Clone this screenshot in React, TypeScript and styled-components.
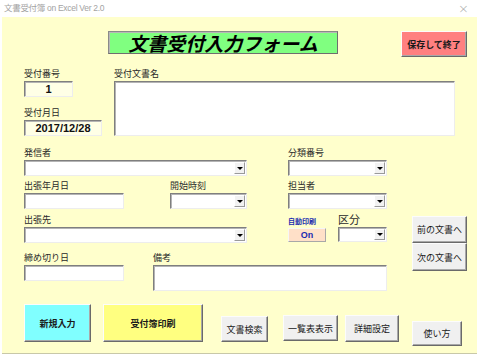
import styled, { createGlobalStyle } from 'styled-components'

const jp = `'Noto Sans CJK JP', 'Noto Sans', sans-serif`

const GlobalStyle = createGlobalStyle`
  html, body {
    margin: 0;
    padding: 0;
    background: #ffffff;
  }
  body {
    font-family: ${jp};
  }
  * {
    box-sizing: border-box;
  }
`

export default function App() {
  return (
    <>
      <GlobalStyle />
      <Window>
        <TitleBar>
          <WindowTitle>文書受付簿 on Excel Ver 2.0</WindowTitle>
          <CloseMark>×</CloseMark>
        </TitleBar>

        <Body>
          <HeaderRow>
            <FormTitle>文書受付入力フォーム</FormTitle>
            <Btn $bg="#ff8080" $w={66} $h={26} $ml={63} $bold>
              保存して終了
            </Btn>
          </HeaderRow>

          <TopBlock>
            <Column>
              <Field $w={49}>
                <Label>受付番号</Label>
                <DisplayBox $h={16}>1</DisplayBox>
              </Field>
              <Field $w={78} $mt={15}>
                <Label>受付月日</Label>
                <DisplayBox $h={16}>2017/12/28</DisplayBox>
              </Field>
            </Column>
            <Field $w={341} $ml={12}>
              <Label>受付文書名</Label>
              <TextBox $h={55} />
            </Field>
          </TopBlock>

          <RowsArea>
            <Column>
              <Row>
                <Field $w={223}>
                  <Label>発信者</Label>
                  <Combo h={16} />
                </Field>
                <Field $w={99} $ml={41}>
                  <Label>分類番号</Label>
                  <Combo h={16} />
                </Field>
              </Row>

              <Row $mt={9}>
                <Field $w={100}>
                  <Label>出張年月日</Label>
                  <TextBox $h={16} />
                </Field>
                <Field $w={77} $ml={46}>
                  <Label>開始時刻</Label>
                  <Combo h={16} />
                </Field>
                <Field $w={99} $ml={41}>
                  <Label>担当者</Label>
                  <Combo h={16} />
                </Field>
              </Row>

              <Row $mt={10}>
                <Field $w={223}>
                  <Label>出張先</Label>
                  <Combo h={16} />
                </Field>
                <Field $w={38} $ml={41}>
                  <SmallLabel>自動印刷</SmallLabel>
                  <Toggle>On</Toggle>
                </Field>
                <Field $w={49} $ml={12}>
                  <BigLabel>区分</BigLabel>
                  <Combo h={15} />
                </Field>
              </Row>

              <Row $mt={14}>
                <Field $w={100}>
                  <Label>締め切り日</Label>
                  <TextBox $h={16} />
                </Field>
                <Field $w={234} $ml={29}>
                  <Label>備考</Label>
                  <TextBox $h={26} />
                </Field>
              </Row>
            </Column>

            <NavColumn>
              <Btn $w={55} $h={27}>前の文書へ</Btn>
              <Btn $w={55} $h={28}>次の文書へ</Btn>
            </NavColumn>
          </RowsArea>

          <ButtonRow>
            <Btn $bg="#80ffff" $w={67} $h={38} $bold>
              新規入力
            </Btn>
            <Btn $bg="#ffff80" $w={100} $h={38} $ml={12} $bold>
              受付簿印刷
            </Btn>
            <Btn $w={47} $h={26} $ml={18} $mt={12}>
              文書検索
            </Btn>
            <Btn $w={55} $h={26} $ml={15} $mt={11}>
              一覧表表示
            </Btn>
            <Btn $w={54} $h={27} $ml={7} $mt={11}>
              詳細設定
            </Btn>
            <Btn $w={50} $h={25} $ml={13} $mt={17}>
              使い方
            </Btn>
          </ButtonRow>
        </Body>
      </Window>
    </>
  )
}

function Combo({ h }: { h: number }) {
  return (
    <ComboBox $h={h}>
      <DropButton>
        <Arrow />
      </DropButton>
    </ComboBox>
  )
}

const Window = styled.div`
  width: 480px;
  height: 356px;
  display: flex;
  flex-direction: column;
  background: #ffffff;
  overflow: hidden;
`

const TitleBar = styled.div`
  height: 17px;
  display: flex;
  align-items: center;
  justify-content: space-between;
  padding: 0 11px 0 4px;
  color: #a3a3a3;
`

const WindowTitle = styled.span`
  font-family: 'Liberation Sans', 'Noto Sans CJK JP', sans-serif;
  font-size: 8.5px;
  letter-spacing: -0.3px;
  line-height: 17px;
`

const CloseMark = styled.span`
  font-family: 'DejaVu Sans', sans-serif;
  font-size: 13px;
  font-weight: 300;
  line-height: 17px;
  color: #a8a8a8;
`

const Body = styled.div`
  flex: 1;
  margin: 0 3px 2px 2px;
  padding: 14px 0 0 22px;
  background: #ffffcc;
  border-bottom: 1px solid #c8c8a8;
  display: flex;
  flex-direction: column;
`

const HeaderRow = styled.div`
  display: flex;
  align-items: flex-start;
  padding-left: 84px;
`

const FormTitle = styled.div`
  width: 230px;
  height: 23px;
  background: #80ff80;
  border: 1px solid #8a8a8a;
  border-right-color: #6e6e6e;
  border-bottom-color: #6e6e6e;
  box-shadow: inset 1px 1px 0 #b8b8b8;
  font-family: ${jp};
  font-size: 19px;
  font-weight: 700;
  font-style: italic;
  line-height: 21px;
  text-align: center;
  color: #000;
`

const TopBlock = styled.div`
  display: flex;
  margin-top: 16px;
`

const Column = styled.div`
  display: flex;
  flex-direction: column;
`

const Row = styled.div<{ $mt?: number }>`
  display: flex;
  align-items: flex-start;
  margin-top: ${({ $mt }) => $mt ?? 0}px;
`

const Field = styled.div<{ $w: number; $ml?: number; $mt?: number }>`
  display: flex;
  flex-direction: column;
  width: ${({ $w }) => $w}px;
  margin-left: ${({ $ml }) => $ml ?? 0}px;
  margin-top: ${({ $mt }) => $mt ?? 0}px;
`

/* label block is 8px tall; the small line-height lifts the glyphs clear of the box */
const Label = styled.div`
  height: 8px;
  font-size: 9px;
  line-height: 2px;
  color: #2a2a2a;
  white-space: nowrap;
`

const SmallLabel = styled(Label)`
  font-size: 7px;
  font-weight: 700;
  line-height: 4px;
  color: #1a2bb0;
`

const BigLabel = styled(Label)`
  font-size: 11px;
  line-height: 1px;
  color: #2a2a2a;
`

const Sunken = styled.div<{ $h: number }>`
  height: ${({ $h }) => $h}px;
  border: 1px solid;
  border-color: #7f7f7f #ededed #ededed #7f7f7f;
  box-shadow: inset 1px 1px 0 #b4b4b4;
`

const TextBox = styled(Sunken)`
  background: #ffffff;
`

const DisplayBox = styled(Sunken)`
  background: #ffffe6;
  font-family: 'Liberation Sans', sans-serif;
  font-size: 11px;
  font-weight: 700;
  line-height: 14px;
  text-align: center;
  color: #111;
`

const ComboBox = styled(Sunken)`
  background: #ffffff;
  display: flex;
  justify-content: flex-end;
  padding: 1px;
`

const DropButton = styled.div`
  width: 11px;
  height: 100%;
  background: #f2f2f2;
  border: 1px solid;
  border-color: #ffffff #9a9a9a #9a9a9a #ffffff;
  display: flex;
  align-items: center;
  justify-content: center;
`

const Arrow = styled.div`
  width: 0;
  height: 0;
  border-left: 3px solid transparent;
  border-right: 3px solid transparent;
  border-top: 3px solid #000;
`

const Toggle = styled.div`
  height: 14px;
  margin-top: 1px;
  background: #ffe0c8;
  border: 1px solid;
  border-color: #f6f6f6 #a8a8a8 #a8a8a8 #f6f6f6;
  font-family: 'Liberation Sans', sans-serif;
  font-size: 9px;
  font-weight: 700;
  line-height: 12px;
  text-align: center;
  color: #1a2bb0;
`

const RowsArea = styled.div`
  display: flex;
  margin-top: 16px;
`

const NavColumn = styled.div`
  display: flex;
  flex-direction: column;
  margin: 64px 0 0 25px;
`

const ButtonRow = styled.div`
  display: flex;
  align-items: flex-start;
  margin-top: 13px;
`

const Btn = styled.button<{
  $bg?: string
  $w: number
  $h: number
  $ml?: number
  $mt?: number
  $bold?: boolean
}>`
  width: ${({ $w }) => $w}px;
  height: ${({ $h }) => $h}px;
  margin: ${({ $mt }) => $mt ?? 0}px 0 0 ${({ $ml }) => $ml ?? 0}px;
  padding: 0;
  background: ${({ $bg }) => $bg ?? '#f0f0f0'};
  border: 1px solid;
  border-color: #fcfcfc #6a6a6a #6a6a6a #fcfcfc;
  box-shadow: inset -1px -1px 0 #a8a8a8;
  font-family: ${jp};
  font-size: 9px;
  font-weight: ${({ $bold }) => ($bold ? 700 : 400)};
  color: #1a1a1a;
  white-space: nowrap;
  cursor: default;
`
